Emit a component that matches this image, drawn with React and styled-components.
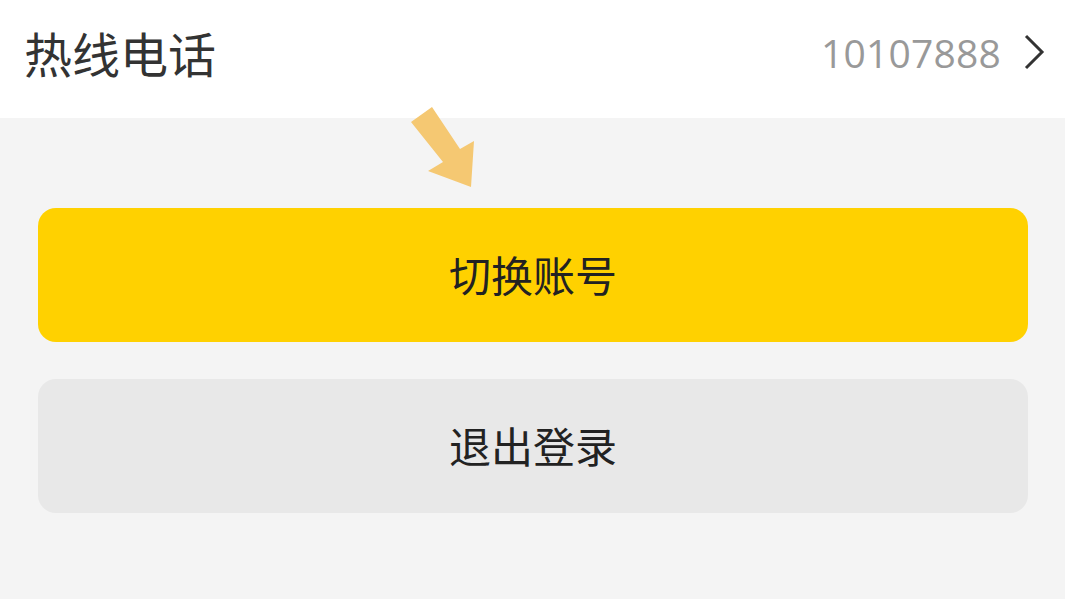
import React from "react";
import styled, { createGlobalStyle } from "styled-components";

const Global = createGlobalStyle`
  html, body { margin: 0; padding: 0; background: #f4f4f4; }
  body { font-family: "Noto Sans CJK SC", "Noto Sans", sans-serif; }
  #root { min-height: 599px; }
`;

const Page = styled.div`
  position: relative;
  width: 1065px;
  height: 599px;
  background: #f4f4f4;
  overflow: hidden;
`;

const Header = styled.div`
  height: 118px;
  background: #ffffff;
  display: flex;
  align-items: center;
  justify-content: space-between;
  padding: 0 20px 0 24px;
  box-sizing: border-box;
`;

const Title = styled.div`
  font-family: "Noto Sans CJK SC", sans-serif;
  font-size: 48px;
  color: #333333;
  line-height: 1;
  margin-top: -14px;
`;

const Right = styled.div`
  display: flex;
  align-items: center;
  gap: 22px;
  margin-top: -14px;
`;

const Phone = styled.span`
  font-family: "Open Sans", "Liberation Sans", sans-serif;
  font-size: 39px;
  color: #999999;
  letter-spacing: 0.2px;
`;

const Content = styled.div`
  display: flex;
  flex-direction: column;
  gap: 37px;
  padding: 90px 37px 0 38px;
`;

const Button = styled.div`
  height: 134px;
  border-radius: 18px;
  background: ${(p) => (p.$primary ? "#ffd100" : "#e8e8e8")};
  display: flex;
  align-items: center;
  justify-content: center;
  font-family: "Noto Sans CJK SC", sans-serif;
  font-size: 42px;
  color: #222222;
  padding-bottom: 4px;
  box-sizing: border-box;
`;

const Arrow = styled.svg`
  position: absolute;
  left: 0;
  top: 0;
  pointer-events: none;
`;

export default function App() {
  return (
    <>
      <Global />
      <Page>
        <Header>
          <Title>热线电话</Title>
          <Right>
            <Phone>10107888</Phone>
            <svg width="22" height="36" viewBox="0 0 22 36">
              <path d="M3 2 L19 18 L3 34" fill="none" stroke="#333" strokeWidth="3" />
            </svg>
          </Right>
        </Header>
        <Content>
          <Button $primary>切换账号</Button>
          <Button>退出登录</Button>
        </Content>
        <Arrow width="1065" height="599" viewBox="0 0 1065 599">
          <polygon
            points="411,122 432,107 460,149 474,141 471,187 428,171 443,162"
            fill="#f5c872"
          />
        </Arrow>
      </Page>
    </>
  );
}
